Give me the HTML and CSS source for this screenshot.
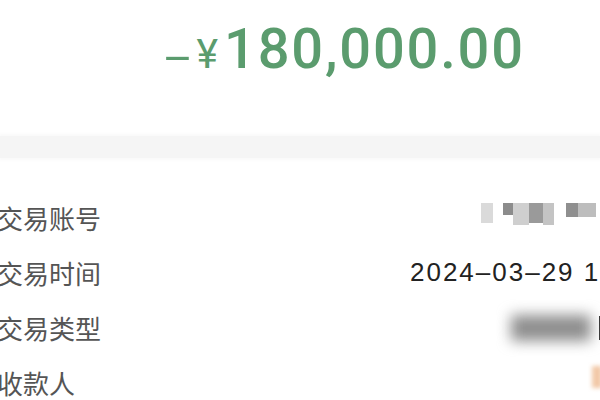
FILE: index.html
```html
<!DOCTYPE html>
<html lang="zh-CN">
<head>
  <meta charset="UTF-8">
  <meta name="viewport" content="width=device-width, initial-scale=1.0">
  <title>交易详情</title>
  <link rel="stylesheet" href="styles.css">
</head>
<body>
  <!-- 金额 -->
  <div class="amount">
    <span class="minus">–</span><span class="yen">¥</span><span class="num">180,000.00</span>
  </div>

  <div class="divider"></div>

  <!-- 交易明细 -->
  <div class="detail">
    <div class="row">
      <span class="label">交易账号</span>
      <span class="value">
        <span class="mosaic">
          <i class="m1"></i><i class="m2"></i><i class="m3"></i><i class="m4"></i><i class="m5"></i><i class="m6"></i><i class="m7"></i>
        </span>
      </span>
    </div>
    <div class="row">
      <span class="label">交易时间</span>
      <span class="value date">2024–03–29 14:32:10</span>
    </div>
    <div class="row">
      <span class="label">交易类型</span>
      <span class="value"><span class="smudge"></span><span class="edge"></span></span>
    </div>
    <div class="row">
      <span class="label">收款人</span>
      <span class="value"><span class="tint"></span></span>
    </div>
  </div>
</body>
</html>
```

FILE: styles.css
```css
html, body {
  margin: 0;
  padding: 0;
  background: #fff;
  overflow: hidden;
}
body {
  width: 600px;
  height: 400px;
  font-family: "Noto Sans CJK SC", "Liberation Sans", sans-serif;
}

/* 金额 */
.amount {
  height: 136px;
  padding-left: 164px;
  box-sizing: border-box;
  padding-top: 16px;
  color: #5b9c6e;
  font-family: Roboto, "Liberation Sans", sans-serif;
  font-weight: 500;
  white-space: nowrap;
}
.amount .minus {
  font-size: 42px;
  font-weight: 400;
  display: inline-block;
  transform: scaleX(1.1);
  vertical-align: -6px;
  margin-right: 5px;
}
.amount .yen {
  font-size: 41px;
  font-weight: 400;
  margin-right: 6px;
}
.amount .num {
  font-size: 56px;
  letter-spacing: 1.8px;
}

.divider {
  height: 22px;
  background: #f5f5f5;
  box-shadow: 0 0 4px 2px #f9f9f9;
}

/* 明细 */
.detail {
  padding-top: 32px;
  margin-left: -3px;
  width: 730px;
}
.row {
  display: flex;
  justify-content: space-between;
  align-items: center;
  height: 55px;
}
.label {
  font-size: 26px;
  color: #555;
}
.value {
  display: flex;
  align-items: center;
  white-space: nowrap;
}
.date {
  font-family: "Liberation Sans", Arial, sans-serif;
  font-size: 26px;
  letter-spacing: 2px;
  color: #222;
  margin-right: 26px;
}

/* 打码 */
.mosaic {
  display: flex;
  align-items: flex-start;
  width: 246px;
  height: 22px;
  margin-top: -8px;
}
.mosaic i {
  display: block;
  height: 20px;
}
.mosaic .m1 { width: 12px; background: #dadada; margin-right: 10px; }
.mosaic .m2 { width: 10px; background: #8c8c8c; height: 12px; }
.mosaic .m3 { width: 16px; background: #cfcfcf; height: 22px; }
.mosaic .m4 { width: 14px; background: #9a9a9a; }
.mosaic .m5 { width: 11px; background: #c4c4c4; height: 22px; margin-right: 12px; }
.mosaic .m6 { width: 12px; background: #8f8f8f; height: 14px; }
.mosaic .m7 { width: 18px; background: #bdbdbd; height: 14px; }

.smudge {
  display: block;
  width: 80px;
  height: 26px;
  background: #8e8e8e;
  filter: blur(7px);
  margin-right: 8px;
}
.edge {
  display: block;
  width: 4px;
  height: 24px;
  background: #333;
  margin-right: 124px;
}
.tint {
  display: block;
  width: 10px;
  height: 22px;
  background: #f2c9a8;
  filter: blur(2px);
  margin-right: 125px;
  margin-top: -12px;
}
```
